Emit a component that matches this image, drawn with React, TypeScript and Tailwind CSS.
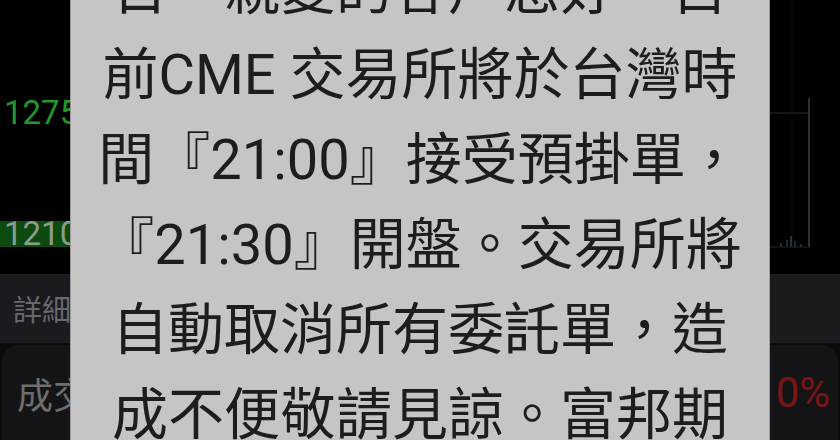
import React from "react";

const lines = [
  "日，親愛的客戶您好，目",
  "前CME 交易所將於台灣時",
  "間『21:00』接受預掛單，",
  "『21:30』開盤。交易所將",
  "自動取消所有委託單，造",
  "成不便敬請見諒。富邦期",
];

function ChartArea() {
  return (
    <div className="flex h-[274px] w-full bg-black">
      {/* price axis */}
      <div className="flex w-[90px] shrink-0 flex-col pt-[96px] font-['Roboto',sans-serif]">
        <div className="pl-[4px] text-[33px] leading-[33px] text-[#1f9a2a]">1275</div>
        <div className="mt-[92px] w-[80px] bg-[#0c4a0f] pl-[4px] text-[33px] leading-[26px] text-[#8c9c8c]">
          1210
        </div>
      </div>
      <div className="flex-1">
        <svg width="750" height="274" viewBox="0 0 750 274">
          <line x1="702" y1="0" x2="702" y2="246" stroke="#0e0f10" strokeWidth="1" />
          <line x1="680" y1="113" x2="719" y2="113" stroke="#2a2a2a" strokeWidth="1" />
          <line x1="719" y1="98" x2="719" y2="247" stroke="#2a323a" strokeWidth="2" />
          <line x1="680" y1="247" x2="720" y2="247" stroke="#1e2328" strokeWidth="1" />
          <rect x="690" y="243" width="2" height="4" fill="#1f2a33" />
          <rect x="696" y="240" width="2" height="7" fill="#1f2a33" />
          <rect x="700" y="236" width="2" height="11" fill="#26323c" />
          <rect x="704" y="241" width="2" height="6" fill="#1f2a33" />
          <rect x="710" y="244" width="2" height="3" fill="#1f2a33" />
        </svg>
      </div>
    </div>
  );
}

export default function App() {
  return (
    <div className="relative h-[440px] w-[840px] overflow-hidden bg-black font-['Noto_Sans_CJK_TC',sans-serif]">
      <ChartArea />
      <div className="flex h-[69px] items-center bg-[#191b1e] pl-[13px]">
        <span className="text-[29px] leading-none text-[#666a6e]">詳細</span>
      </div>
      <div className="h-[97px] bg-[#0b0b0b] pt-[2px]">
        <div className="mx-[2px] flex h-full items-center justify-between rounded-t-[16px] bg-[#141416] pl-[15px] pr-[8px]">
          <span className="text-[36px] leading-none text-[#6e6e6e]">成交</span>
          <span className="font-['Roboto',sans-serif] text-[42px] leading-none text-[#7a1515]">0%</span>
        </div>
      </div>

      {/* message dialog */}
      <div className="absolute left-[70px] top-0 h-[440px] w-[700px] overflow-hidden border-x border-[#9c9c9c] bg-[#c5c5c5]">
        <div className="-mt-[52px] flex flex-col items-center font-['Roboto','Noto_Sans_CJK_TC',sans-serif] text-[56px] leading-[85px] text-[#1d1d1d]">
          {lines.map((line, i) => (
            <div key={i} className="whitespace-nowrap">
              {line}
            </div>
          ))}
        </div>
      </div>
    </div>
  );
}
